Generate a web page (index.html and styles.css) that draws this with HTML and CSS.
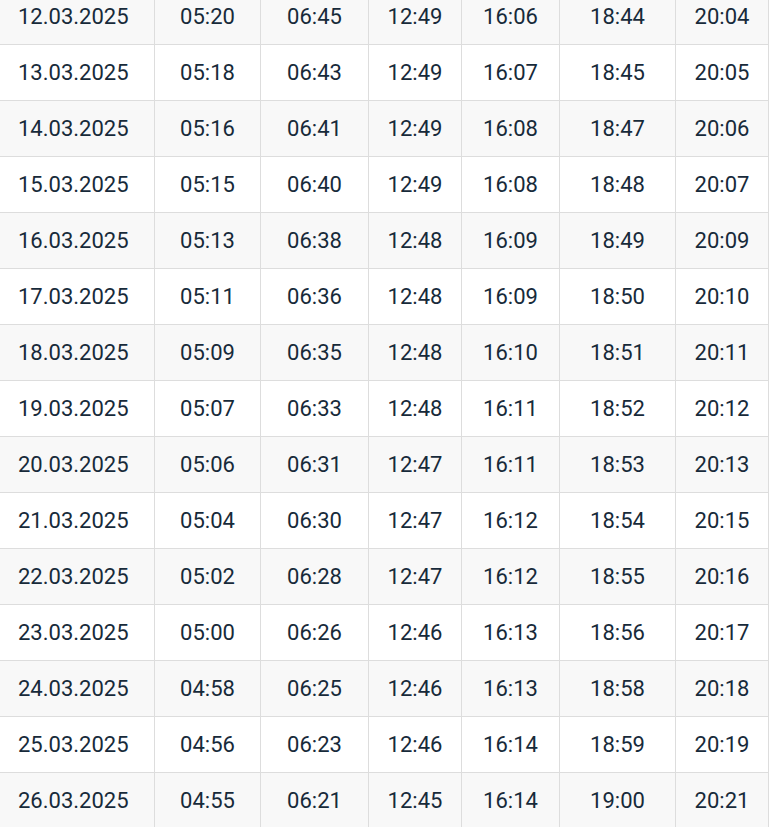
FILE: index.html
```html
<!DOCTYPE html>
<html lang="de">
<head>
<meta charset="utf-8">
<title>Gebetszeiten</title>
<link rel="stylesheet" href="styles.css">
</head>
<body>
<div class="times">
  <div class="row"><div class="cell date">12.03.2025</div><div class="cell">05:20</div><div class="cell">06:45</div><div class="cell">12:49</div><div class="cell">16:06</div><div class="cell">18:44</div><div class="cell">20:04</div></div>
  <div class="row"><div class="cell date">13.03.2025</div><div class="cell">05:18</div><div class="cell">06:43</div><div class="cell">12:49</div><div class="cell">16:07</div><div class="cell">18:45</div><div class="cell">20:05</div></div>
  <div class="row"><div class="cell date">14.03.2025</div><div class="cell">05:16</div><div class="cell">06:41</div><div class="cell">12:49</div><div class="cell">16:08</div><div class="cell">18:47</div><div class="cell">20:06</div></div>
  <div class="row"><div class="cell date">15.03.2025</div><div class="cell">05:15</div><div class="cell">06:40</div><div class="cell">12:49</div><div class="cell">16:08</div><div class="cell">18:48</div><div class="cell">20:07</div></div>
  <div class="row"><div class="cell date">16.03.2025</div><div class="cell">05:13</div><div class="cell">06:38</div><div class="cell">12:48</div><div class="cell">16:09</div><div class="cell">18:49</div><div class="cell">20:09</div></div>
  <div class="row"><div class="cell date">17.03.2025</div><div class="cell">05:11</div><div class="cell">06:36</div><div class="cell">12:48</div><div class="cell">16:09</div><div class="cell">18:50</div><div class="cell">20:10</div></div>
  <div class="row"><div class="cell date">18.03.2025</div><div class="cell">05:09</div><div class="cell">06:35</div><div class="cell">12:48</div><div class="cell">16:10</div><div class="cell">18:51</div><div class="cell">20:11</div></div>
  <div class="row"><div class="cell date">19.03.2025</div><div class="cell">05:07</div><div class="cell">06:33</div><div class="cell">12:48</div><div class="cell">16:11</div><div class="cell">18:52</div><div class="cell">20:12</div></div>
  <div class="row"><div class="cell date">20.03.2025</div><div class="cell">05:06</div><div class="cell">06:31</div><div class="cell">12:47</div><div class="cell">16:11</div><div class="cell">18:53</div><div class="cell">20:13</div></div>
  <div class="row"><div class="cell date">21.03.2025</div><div class="cell">05:04</div><div class="cell">06:30</div><div class="cell">12:47</div><div class="cell">16:12</div><div class="cell">18:54</div><div class="cell">20:15</div></div>
  <div class="row"><div class="cell date">22.03.2025</div><div class="cell">05:02</div><div class="cell">06:28</div><div class="cell">12:47</div><div class="cell">16:12</div><div class="cell">18:55</div><div class="cell">20:16</div></div>
  <div class="row"><div class="cell date">23.03.2025</div><div class="cell">05:00</div><div class="cell">06:26</div><div class="cell">12:46</div><div class="cell">16:13</div><div class="cell">18:56</div><div class="cell">20:17</div></div>
  <div class="row"><div class="cell date">24.03.2025</div><div class="cell">04:58</div><div class="cell">06:25</div><div class="cell">12:46</div><div class="cell">16:13</div><div class="cell">18:58</div><div class="cell">20:18</div></div>
  <div class="row"><div class="cell date">25.03.2025</div><div class="cell">04:56</div><div class="cell">06:23</div><div class="cell">12:46</div><div class="cell">16:14</div><div class="cell">18:59</div><div class="cell">20:19</div></div>
  <div class="row"><div class="cell date">26.03.2025</div><div class="cell">04:55</div><div class="cell">06:21</div><div class="cell">12:45</div><div class="cell">16:14</div><div class="cell">19:00</div><div class="cell">20:21</div></div>
</div>
</body>
</html>
```
FILE: styles.css
```css
html, body {
  margin: 0;
  padding: 0;
  background: #ffffff;
}

body {
  font-family: Roboto, "Liberation Sans", Arial, sans-serif;
  font-size: 22px;
  color: #172a3a;
  overflow: hidden;
}

.times {
  width: 769px;
  margin-top: -11px;
}

.row {
  display: grid;
  grid-template-columns: 155px 106px 108px 93px 98px 116px 93px;
}

.row:nth-child(odd) {
  background: #f8f8f8;
}

.cell {
  box-sizing: border-box;
  height: 56px;
  border-right: 1px solid #dddddd;
  border-bottom: 1px solid #dddddd;
  display: flex;
  align-items: center;
  justify-content: center;
}

.cell.date {
  justify-content: flex-start;
  padding-left: 18px;
}
```
